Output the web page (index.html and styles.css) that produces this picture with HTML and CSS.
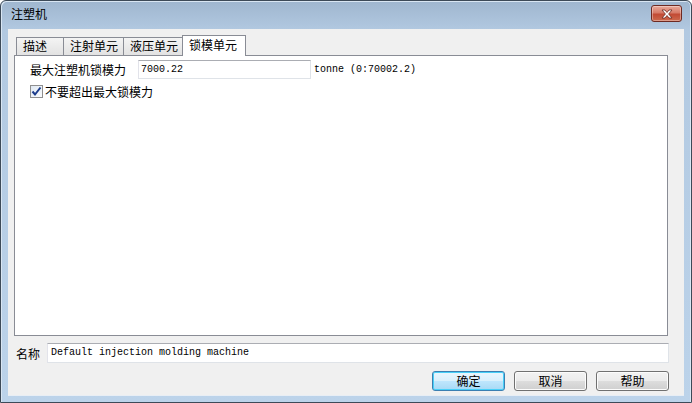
FILE: index.html
```html
<!DOCTYPE html>
<html>
<head>
<meta charset="utf-8">
<link rel="stylesheet" href="styles.css">
</head>
<body>
<div class="window">
  <div class="titlebar">
    <span class="title">注塑机</span>
    <div class="close">
      <svg width="14" height="10" viewBox="0 0 14 10">
        <path d="M2 1 L5 1 L7 3.5 L9 1 L12 1 L8.6 5 L12 9 L9 9 L7 6.5 L5 9 L2 9 L5.4 5 Z" fill="#fff" stroke="#6b2a20" stroke-width="0.8"/>
      </svg>
    </div>
  </div>
  <div class="client">
    <div class="tabs">
      <div class="tab first">描述</div>
      <div class="tab">注射单元</div>
      <div class="tab">液压单元</div>
      <div class="tab active">锁模单元</div>
    </div>
    <div class="panel">
      <div class="row">
        <span class="label">最大注塑机锁模力</span>
        <div class="input num">7000.22</div>
        <span class="unit">tonne (0:70002.2)</span>
      </div>
      <div class="row check-row">
        <span class="checkbox">
          <svg width="11" height="11" viewBox="0 0 11 11">
            <path d="M1.5 5.5 L4 8.5 L9.5 1.5" fill="none" stroke="#1c3c8c" stroke-width="2"/>
          </svg>
        </span>
        <span class="check-label">不要超出最大锁模力</span>
      </div>
    </div>
    <div class="name-row">
      <span class="name-label">名称</span>
      <div class="input name">Default injection molding machine</div>
    </div>
    <div class="buttons">
      <div class="btn default">确定</div>
      <div class="btn">取消</div>
      <div class="btn">帮助</div>
    </div>
  </div>
</div>
</body>
</html>
```

FILE: styles.css
```css
* { box-sizing: border-box; }
html, body { margin: 0; padding: 0; }
body {
  width: 692px;
  height: 403px;
  font-family: "Noto Sans CJK SC", "Noto Sans", sans-serif;
  font-size: 12px;
  color: #000;
  background: #fff;
  overflow: hidden;
}
.window {
  width: 692px;
  height: 403px;
  border: 1px solid #3d4a58;
  border-radius: 6px 6px 0 0;
  background: linear-gradient(to bottom, #9fb6cf 0px, #b2c9e1 30px, #bcd3ea 100%);
  display: flex;
  flex-direction: column;
  box-shadow: inset 1px 1px 0 #d9e6f3, inset -1px 0 0 #d9e6f3;
}
.titlebar {
  height: 29px;
  display: flex;
  align-items: center;
  justify-content: space-between;
  padding: 0 9px 0 10px;
}
.title {
  font-size: 12px;
  line-height: 14px;
  margin-top: -2px;
}
.close {
  width: 31px;
  height: 17px;
  margin-top: -3px;
  border: 1px solid #6e2a22;
  border-radius: 3px;
  background: linear-gradient(to bottom, #e9a99a 0%, #d77b68 45%, #c24a34 55%, #cc6a4e 100%);
  box-shadow: inset 0 0 0 1px rgba(255,255,255,0.35);
  display: flex;
  align-items: center;
  justify-content: center;
}
.client {
  flex: 1;
  margin: 0 7px 6px 7px;
  background: #f0f0f0;
  padding: 6px 16px 4px 6px;
  display: flex;
  flex-direction: column;
  border-bottom: 1px solid #e8eef5;
}
.tabs {
  height: 20px;
  display: flex;
  align-items: flex-end;
  padding-left: 2px;
}
.tab {
  height: 18px;
  border: 1px solid #898c95;
  border-bottom: none;
  background: linear-gradient(to bottom, #f4f4f4, #e2e2e2);
  padding: 0 5px 0 6px;
  line-height: 16px;
  margin-left: -1px;
  white-space: nowrap;
}
.tab.first {
  margin-left: 0;
  min-width: 48px;
}
.tab.active {
  height: 21px;
  margin-bottom: -1px;
  margin-left: -2px;
  padding: 1px 8px 0 6px;
  background: #fff;
  position: relative;
  z-index: 1;
}
.panel {
  height: 281px;
  border: 1px solid #898c95;
  background: #fff;
  padding: 4px 15px;
}
.row {
  display: flex;
  align-items: center;
  height: 19px;
}
.label { width: 108px; }
.input {
  height: 19px;
  border: 1px solid #dfe3e8;
  border-top-color: #abadb3;
  border-left-color: #e2e3ea;
  background: #fff;
  font-family: "Liberation Mono", "DejaVu Sans Mono", monospace;
  font-size: 10px;
  line-height: 17px;
  padding-left: 2px;
}
.input.num { width: 173px; }
.unit {
  margin-left: 3px;
  font-family: "Liberation Mono", "DejaVu Sans Mono", monospace;
  font-size: 10px;
}
.check-row {
  margin-top: 5px;
  height: 14px;
}
.checkbox {
  width: 13px;
  height: 13px;
  border: 1px solid #8f8f8f;
  background: linear-gradient(135deg, #dfe8f2, #fbfcfd);
  display: flex;
  align-items: center;
  justify-content: center;
  margin-right: 2px;
}
.name-row {
  display: flex;
  align-items: center;
  margin-top: 7px;
  height: 20px;
}
.name-label { width: 33px; padding-left: 2px; }
.input.name {
  flex: 1;
  height: 20px;
  margin-right: -1px;
  padding-left: 3px;
}
.buttons {
  display: flex;
  justify-content: flex-end;
  gap: 9px;
  margin-top: 8px;
  margin-right: -1px;
}
.btn {
  width: 73px;
  height: 20px;
  border: 1px solid #707070;
  border-radius: 3px;
  background: linear-gradient(to bottom, #f2f2f2 0%, #ebebeb 50%, #dddddd 51%, #cfcfcf 100%);
  box-shadow: inset 0 0 0 1px #fcfcfc;
  text-align: center;
  line-height: 17px;
}
.btn.default {
  border-color: #3c7fb1;
  background: linear-gradient(to bottom, #eaf6fd 0%, #d9f0fc 50%, #bee6fd 51%, #a7d9f5 100%);
  box-shadow: inset 0 0 0 1px #48d0f8;
}
```
